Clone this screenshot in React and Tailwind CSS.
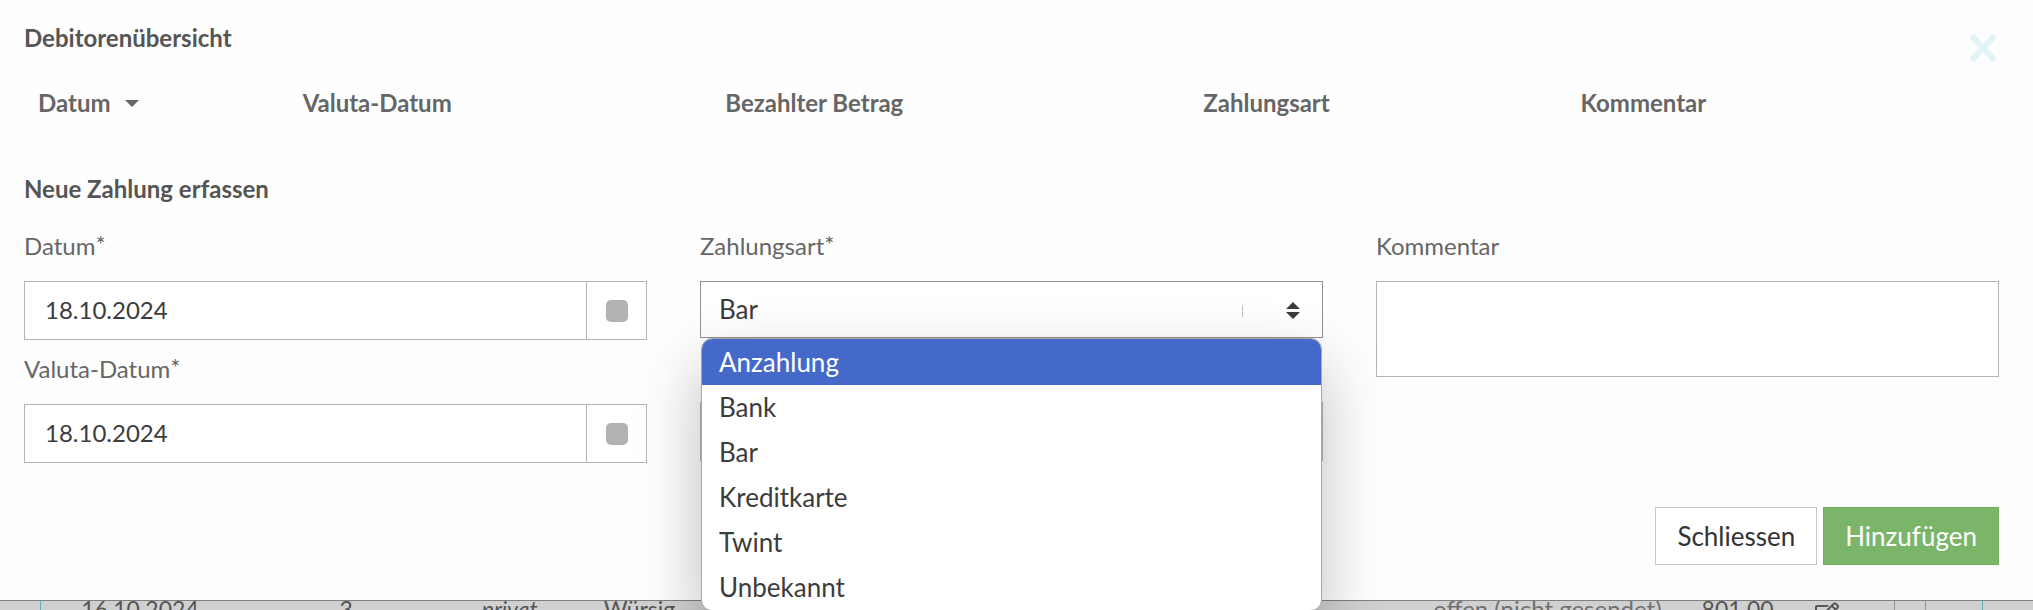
import React, { useState } from 'react';
import { FaRegEdit } from 'react-icons/fa';

const paymentTypes = ['Anzahlung', 'Bank', 'Bar', 'Kreditkarte', 'Twint', 'Unbekannt'];

function Label({ htmlFor, required, children }) {
  return (
    <label htmlFor={htmlFor} className="flex h-[51px] items-start text-2xl leading-8 text-[#666]">
      {children}
      {required && <span className="leading-7">*</span>}
    </label>
  );
}

function DateField({ id, label, value, onChange }) {
  return (
    <div>
      <Label htmlFor={id} required>{label}</Label>
      <div className="flex h-[59px] border border-[#b4b4b4] bg-white">
        <input
          id={id}
          type="text"
          value={value}
          onChange={(e) => onChange(e.target.value)}
          className="min-w-0 flex-1 px-5 pb-px text-2xl text-[#3c3c3c] outline-none"
        />
        <button type="button" aria-label="Kalender" className="flex w-[60px] items-center justify-center border-l border-[#b4b4b4]">
          <span className="size-[22px] rounded-[5px] bg-[#b2b2b2]" />
        </button>
      </div>
    </div>
  );
}

function App() {
  const [date, setDate] = useState('18.10.2024');
  const [valutaDate, setValutaDate] = useState('18.10.2024');
  const [type, setType] = useState('Bar');
  const [amount, setAmount] = useState('');
  const [comment, setComment] = useState('');

  return (
    <div className="h-screen overflow-hidden bg-[#d0d0d0] font-['Lato',sans-serif]">
      <div className="relative border-b border-[#808080] bg-[#fefefe] pt-6 pr-[34px] pb-[35px] pl-6">
        <button type="button" aria-label="Dialog schliessen" className="absolute top-[33px] right-9">
          <svg width="28" height="30" viewBox="0 0 28 30" fill="none" stroke="#e2f4f7" strokeWidth="6">
            <path d="M2.500 2.500 L25.500 27.500 M25.500 2.500 L2.500 27.500" />
          </svg>
        </button>

        <h2 className="text-2xl leading-7 font-bold text-[#555]">Debitorenübersicht</h2>
        <table className="mt-[29px] w-full table-fixed text-left text-2xl leading-[44px] text-[#666]">
          <thead>
            <tr>
              <th className="w-[13.4%] pl-[14px]">
                <button type="button" className="flex items-center gap-[14px]">
                  Datum
                  <svg width="14" height="7" viewBox="0 0 14 7" fill="currentColor"><path d="M0 0h14L7 7z" /></svg>
                </button>
              </th>
              <th className="w-[21.4%] pl-[14px]">Valuta-Datum</th>
              <th className="w-[24.2%] pl-[14px]">Bezahlter Betrag</th>
              <th className="w-[19.1%] pl-[14px]">Zahlungsart</th>
              <th className="pl-[14px]">Kommentar</th>
            </tr>
          </thead>
        </table>

        <h2 className="mt-[50px] text-2xl leading-7 font-bold text-[#555]">Neue Zahlung erfassen</h2>

        <form onSubmit={(e) => e.preventDefault()}>
          <div className="mt-[27px] grid grid-cols-3 gap-x-[53px]">
            <div className="flex flex-col gap-[13px]">
              <DateField id="date" label="Datum" value={date} onChange={setDate} />
              <DateField id="valuta" label="Valuta-Datum" value={valutaDate} onChange={setValutaDate} />
            </div>

            <div className="relative">
              <Label htmlFor="type" required>Zahlungsart</Label>
              <div className="relative">
                <select
                  id="type"
                  value={type}
                  onChange={(e) => setType(e.target.value)}
                  className="block h-[57px] w-full appearance-none border border-[#919191] bg-white px-[18px] text-[26px] text-[#3c3c3c] outline-none"
                >
                  {paymentTypes.map((t) => (
                    <option key={t}>{t}</option>
                  ))}
                </select>
                <span className="pointer-events-none absolute top-6 right-20 h-3 w-px bg-[#c4c4c4]" />
                <svg className="pointer-events-none absolute top-[21px] right-[23px]" width="14" height="17" viewBox="0 0 14 17" fill="#3c3c3c">
                  <path d="M7 0l7 7H0zM7 17l7-7H0z" />
                </svg>
              </div>
              <input
                aria-label="Bezahlter Betrag"
                value={amount}
                onChange={(e) => setAmount(e.target.value)}
                className="mt-16 block h-[59px] w-full border border-[#b4b4b4] bg-white px-5 text-2xl outline-none"
              />

              {/* open option list */}
              <ul
                role="listbox"
                className="absolute top-[108px] right-px left-px z-10 overflow-hidden rounded-[11px] border border-[#a8a8a8] bg-white text-[26px] leading-[45px] text-[#3c3c3c] shadow-[0_28px_64px_rgba(0,0,0,0.26)]"
              >
                {paymentTypes.map((t) => (
                  <li
                    key={t}
                    role="option"
                    aria-selected={t === 'Anzahlung'}
                    className="px-[17px] first:pt-px aria-selected:bg-[#4469c9] aria-selected:text-white"
                  >
                    {t}
                  </li>
                ))}
              </ul>
            </div>

            <div>
              <Label htmlFor="comment">Kommentar</Label>
              <textarea
                id="comment"
                value={comment}
                onChange={(e) => setComment(e.target.value)}
                className="block h-24 w-full resize-none border border-[#b4b4b4] bg-white p-4 text-2xl outline-none"
              />
            </div>
          </div>

          <div className="mt-11 flex justify-end gap-[6px] text-[26px]">
            <button type="button" className="h-[58px] border border-[#c8c8c8] bg-white px-[21px] text-[#333]">Schliessen</button>
            <button type="submit" className="h-[58px] border border-[#6fae5c] bg-[#7bb56a] px-[21px] text-white">Hinzufügen</button>
          </div>
        </form>
      </div>

      {/* invoice list behind the dialog */}
      <table className="w-full table-fixed text-left text-[23px] leading-4 text-[#555]">
        <tbody>
          <tr className="align-top">
            <td className="w-[2%]" />
            <td className="w-[14.7%] border-l border-[#5fb0b8] pl-10">16.10.2024</td>
            <td className="w-[7%]">3</td>
            <td className="w-[6%] italic">privat</td>
            <td className="w-[40.8%]">Würsig</td>
            <td className="w-[13.2%] text-2xl leading-4 text-[#707070]">offen (nicht gesendet)</td>
            <td className="w-[5.6%]">801.00</td>
            <td className="w-[3.9%]">
              <button type="button" aria-label="Bearbeiten" className="block">
                <FaRegEdit size={24} />
              </button>
            </td>
            <td className="w-[1.5%] border-l border-[#959595]" />
            <td className="w-[2.8%] border-l border-[#959595]" />
            <td className="border-l border-[#5fb0b8]" />
          </tr>
        </tbody>
      </table>
    </div>
  );
}

export default App;
